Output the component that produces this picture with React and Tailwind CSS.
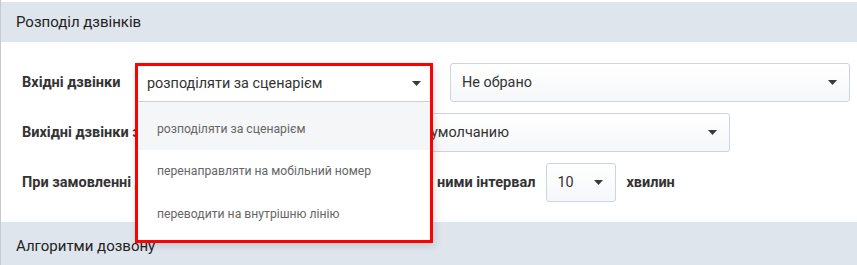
import React from "react";

function Caret() {
  return (
    <svg width="9" height="5" viewBox="0 0 9 5" className="shrink-0">
      <path d="M0 0 L9 0 L4.5 5 Z" fill="#3a3a3a" />
    </svg>
  );
}

function Select({ className = "", children, pl = "pl-[11px]", pr = "pr-[12px]" }) {
  return (
    <div
      className={`h-[39px] flex items-center justify-between ${pl} ${pr} border border-[#cdd4dd] rounded-[3px] bg-gradient-to-b from-white to-[#f6f7f9] text-[14.4px] text-[#333] ${className}`}
    >
      <span className="whitespace-nowrap overflow-hidden">{children}</span>
      <Caret />
    </div>
  );
}

export default function App() {
  const items = [
    "перенаправляти на мобільний номер",
    "переводити на внутрішню лінію",
  ];
  return (
    <div className="w-[857px] h-[265px] overflow-hidden bg-white border-l border-[#c6c9cd] pt-[2px] font-['Roboto',sans-serif]">
      <div className="h-[40px] bg-[#dfe5ed] pl-[15px] flex items-center text-[15px] text-[#222]">
        Розподіл дзвінків
      </div>

      <div className="pl-[21px] pr-[7px] pt-[21px] pb-[20px] flex flex-col gap-[11px]">
        {/* Row 1 */}
        <div className="flex items-center h-[39px]">
          <div className="w-[114px] shrink-0 text-[14.5px] font-bold text-[#333] whitespace-nowrap">
            Вхідні дзвінки
          </div>
          <div className="relative w-[297px] shrink-0">
            <Select>розподіляти за сценарієм</Select>
            <div className="absolute left-[-1px] top-0 w-[298px] h-[180px] border-[3px] border-[#ff0000] bg-white z-10 shadow-[2px_3px_8px_rgba(0,0,0,0.12)] flex flex-col">
              <div className="h-[36px] shrink-0 flex items-center justify-between pl-[9px] pr-[9px] border-b border-[#cfcfcf] text-[14.4px] text-[#333]">
                <span className="whitespace-nowrap">розподіляти за сценарієм</span>
                <Caret />
              </div>
              <div className="h-[48px] shrink-0 pt-[6px] flex items-center pl-[19px] bg-[#f5f6f8] text-[12.2px] text-[#666] whitespace-nowrap">
                розподіляти за сценарієм
              </div>
              {items.map((t) => (
                <div
                  key={t}
                  className="h-[43px] shrink-0 flex items-center pl-[19px] text-[12.2px] text-[#666] whitespace-nowrap"
                >
                  {t}
                </div>
              ))}
            </div>
          </div>
          <Select className="ml-[17px] flex-1">Не обрано</Select>
        </div>

        {/* Row 2 */}
        <div className="flex items-center h-[39px]">
          <div className="w-[114px] shrink-0 text-[14.5px] font-bold text-[#333] whitespace-nowrap overflow-hidden">
            Вихідні дзвінки за замовчуванням
          </div>
          <Select className="w-[594px]">
            <span className="inline-block w-[283px] overflow-hidden align-bottom">Використовувати за</span>
            умолчанию
          </Select>
        </div>

        {/* Row 3 */}
        <div className="flex items-center h-[39px] text-[14.5px] font-bold text-[#333]">
          <span className="w-[415px] shrink-0 whitespace-nowrap overflow-hidden">
            При замовленні дзвінка встановити між
          </span>
          <span className="whitespace-nowrap">ними інтервал</span>
          <Select className="w-[70px] ml-[11px] font-normal" pl="pl-[10px]" pr="pr-[12px]">
            10
          </Select>
          <span className="ml-[10px]">хвилин</span>
        </div>
      </div>

      <div className="h-[46px] bg-[#dfe5ed] pl-[15px] pt-[3px] flex items-center text-[15px] text-[#222]">
        Алгоритми дозвону
      </div>
    </div>
  );
}
